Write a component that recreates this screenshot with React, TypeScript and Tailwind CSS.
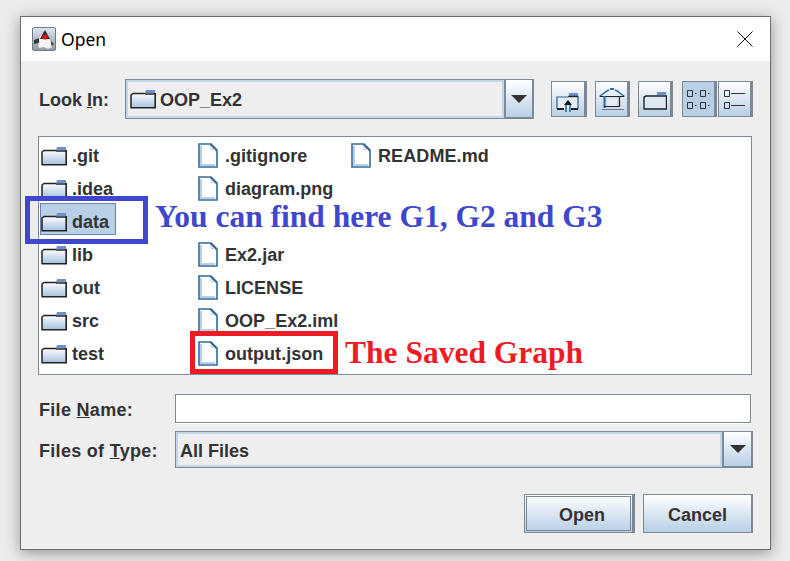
const grad = 'bg-gradient-to-b from-white to-[#b8cfe5]';

const leftCol = ['.git', '.idea', 'data', 'lib', 'out', 'src', 'test'];
const midCol = ['.gitignore', 'diagram.png', '', 'Ex2.jar', 'LICENSE', 'OOP_Ex2.iml', 'output.json'];

function FolderIcon() {
  return (
    <svg width="26" height="20" viewBox="0 0 26 20" className="shrink-0">
      <defs>
        <linearGradient id="fold" x1="0" y1="0" x2="0" y2="1">
          <stop offset="0" stopColor="#ffffff" />
          <stop offset="1" stopColor="#a9c5e2" />
        </linearGradient>
      </defs>
      <path d="M16 1H25V4H15Z" fill="#6f8fc8" />
      <path d="M1 6L3 4H25V18H1Z" fill="url(#fold)" />
      <path d="M1 18.5V6L3 4.5H15" fill="none" stroke="#222" strokeWidth="1.5" />
      <path d="M15 5H25" stroke="#222" strokeWidth="1.5" />
      <path d="M25.2 4V19M0.5 18.7H26" stroke="#222" strokeWidth="1.6" />
    </svg>
  );
}

function FileIcon() {
  return (
    <svg width="20" height="25" viewBox="0 0 20 25" className="shrink-0">
      <path d="M1 1H13L19 7V24H1Z" fill="#ffffff" stroke="#2f6b9f" strokeWidth="1.6" />
      <path d="M3 3V22H17" fill="none" stroke="#b8cfe5" strokeWidth="2" />
      <path d="M12.5 1.5L18.5 7.5" stroke="#2f5f8f" strokeWidth="1.6" />
      <path d="M13 3V6.5H17" fill="none" stroke="#b8cfe5" strokeWidth="1" />
    </svg>
  );
}

function ArrowButton({ className }: { className: string }) {
  return (
    <div className={`flex items-center justify-center border border-[#7a8a99] border-r-2 border-b-2 ${grad} ${className}`}>
      <svg width="16" height="8" viewBox="0 0 16 8">
        <path d="M0 0H16L8 8Z" fill="#333" />
      </svg>
    </div>
  );
}

function ToolButton({ pressed, className, children }: { pressed?: boolean; className: string; children: React.ReactNode }) {
  return (
    <div className={`flex h-[36px] items-center justify-center border border-[#7a8a99] border-r-[3px] ${pressed ? 'bg-[#b8cfe5]' : grad} ${className}`}>
      {children}
    </div>
  );
}

function UpIcon() {
  return (
    <svg width="24" height="20" viewBox="0 0 24 20" className="mt-[6px]">
      <path d="M13 1H22V4H13Z" fill="#6f8fc8" />
      <path d="M1 5H22V17H1Z" fill="#e3edf6" />
      <path d="M1 17V5H12M13 4.5H22V17" fill="none" stroke="#2f5f8f" strokeWidth="1.2" />
      <path d="M12 4.5H22" stroke="#222" strokeWidth="1.4" />
      <path d="M1 17H8M15 17H22" stroke="#222" strokeWidth="2" />
      <path d="M10 13V20M14 13V20" stroke="#2f6b9f" strokeWidth="1.6" />
      <path d="M12 8L8 13H16Z" fill="#111" />
    </svg>
  );
}

function HomeIcon() {
  return (
    <svg width="26" height="24" viewBox="0 0 26 24">
      <path d="M5 9H21V21H5Z" fill="#c9dbec" />
      <path d="M8 11H18V19H8Z" fill="#e4edf5" />
      <path d="M0.5 9.5L8 4L10 3" fill="none" stroke="#2f6b9f" strokeWidth="1.5" />
      <path d="M16 3L18 4L25.5 9.5" fill="none" stroke="#2f6b9f" strokeWidth="1.5" />
      <path d="M11 2H15" stroke="#2f6b9f" strokeWidth="2" />
      <path d="M1 9.5H25" stroke="#222" strokeWidth="1" />
      <path d="M5.5 9V21" stroke="#2f6b9f" strokeWidth="2" />
      <path d="M20.5 9V20M5 19.5H21" stroke="#222" strokeWidth="1.2" />
      <path d="M3 22.5H25" stroke="#778" strokeWidth="1" />
    </svg>
  );
}

function NewFolderIcon() {
  return (
    <svg width="24" height="19" viewBox="0 0 24 19" className="mt-[2px]">
      <path d="M14 1H23V4H14Z" fill="#6f8fc8" />
      <path d="M1 6H23V17H1Z" fill="#dce8f3" />
      <path d="M1 17.5V6L3 5H13" fill="none" stroke="#222" strokeWidth="1.4" />
      <path d="M13 5H23.5V18H0.5" fill="none" stroke="#222" strokeWidth="1.4" />
    </svg>
  );
}

function ListIcon() {
  const cells = [
    [0, 0],
    [13, 0],
    [0, 12],
    [13, 12],
  ];
  return (
    <svg width="24" height="20" viewBox="0 0 24 20">
      {cells.map(([x, y]) => (
        <g key={`${x}-${y}`}>
          <path d={`M${x + 0.5} ${y + 1.5}h5v6h-5z`} fill="none" stroke="#333" strokeWidth="1" />
          <path d={`M${x + 8} ${y + 4}h1.5v1h-1.5z`} fill="#333" />
        </g>
      ))}
    </svg>
  );
}

function DetailsIcon() {
  return (
    <svg width="22" height="20" viewBox="0 0 22 20">
      <path d="M0.5 1.5h5v6h-5zM0.5 13.5h5v6h-5z" fill="none" stroke="#333" strokeWidth="1" />
      <path d="M7 4.5H21M7 16.5H21" stroke="#333" strokeWidth="1" />
    </svg>
  );
}

function JavaIcon() {
  return (
    <svg width="24" height="24" viewBox="0 0 24 24" className="shrink-0">
      <defs>
        <linearGradient id="duke" x1="0" y1="0" x2="0" y2="1">
          <stop offset="0" stopColor="#dfe6ee" />
          <stop offset="1" stopColor="#8d99a6" />
        </linearGradient>
      </defs>
      <rect x="0.5" y="0.5" width="23" height="23" rx="1.5" fill="url(#duke)" stroke="#6c7a8a" />
      <path d="M13 3L18 13L20 20L16 22L12 20L7 21L6 15L8 10Z" fill="#f4f4f4" />
      <path d="M13 3L18 12H8L10.5 7Z" fill="#2b2b2b" />
      <circle cx="13" cy="10" r="2.6" fill="#e2141c" />
      <path d="M2 13L7 11V16L2 17Z M19 14L22 17L19.5 19Z" fill="#3a3a3a" />
    </svg>
  );
}

export default function App() {
  return (
    <div className="h-[561px] w-[790px] overflow-hidden bg-[#ececec] pl-5 pt-4 font-['Liberation_Sans',sans-serif] text-[18px] font-bold text-[#333333]">
      <div className="relative flex h-[534px] w-[751px] flex-col border border-[#6e6e6e] bg-[#eeeeee] shadow-[0_3px_14px_rgba(0,0,0,0.38)]">
        {/* title bar */}
        <div className="flex h-[44px] items-center bg-white pl-[11px] pr-[17px]">
          <JavaIcon />
          <span className="ml-[5px] font-['Noto_Sans',sans-serif] text-[17.5px] font-normal text-black">Open</span>
          <svg width="16" height="16" viewBox="0 0 16 16" className="ml-auto">
            <path d="M0.5 0.5L15.5 15.5M15.5 0.5L0.5 15.5" stroke="#111" strokeWidth="1" />
          </svg>
        </div>

        {/* look in row */}
        <div className="mt-[18px] flex h-[40px] items-center pl-[18px]">
          <span className="w-[86px] pt-[3px]">
            Look <span className="underline">I</span>n:
          </span>
          <div className="flex h-[40px] w-[409px]">
            <div className="flex w-[380px] items-center border border-[#7a8a99] pl-[4px] shadow-[inset_0_0_0_2px_#c5d6e8]">
              <FolderIcon />
              <span className="ml-[4px] pt-[3px]">OOP_Ex2</span>
            </div>
            <ArrowButton className="w-[29px]" />
          </div>
          <div className="ml-[17px] flex items-center">
            <ToolButton className="w-[36px]"><UpIcon /></ToolButton>
            <ToolButton className="ml-[8px] w-[35px]"><HomeIcon /></ToolButton>
            <ToolButton className="ml-[8px] w-[35px]"><NewFolderIcon /></ToolButton>
            <ToolButton pressed className="ml-[9px] w-[35px]"><ListIcon /></ToolButton>
            <ToolButton className="ml-px w-[35px]"><DetailsIcon /></ToolButton>
          </div>
        </div>

        {/* file list */}
        <div className="ml-[17px] mt-[17px] flex h-[239px] w-[714px] border border-[#7a8a99] bg-white pl-[2px] pt-[2px]">
          <div className="w-[157px]">
            {leftCol.map((name) => (
              <div key={name} className="relative flex h-[33px] items-center">
                {name === 'data' && (
                  <div className="absolute -top-[2px] left-[-1px] h-[32px] w-[76px] border border-[#6382bf] bg-[#b8cfe5]" />
                )}
                <div className="relative flex items-center">
                  <FolderIcon />
                  <span className="ml-[5px] pt-px">{name}</span>
                </div>
              </div>
            ))}
          </div>
          <div className="w-[153px]">
            {midCol.map((name, i) => (
              <div key={i} className="flex h-[33px] items-center">
                {name && <FileIcon />}
                {name && <span className="ml-[7px] pt-px tracking-[0.03px]">{name}</span>}
              </div>
            ))}
          </div>
          <div>
            <div className="flex h-[33px] items-center">
              <FileIcon />
              <span className="ml-[7px] pt-px tracking-[0.1px]">README.md</span>
            </div>
          </div>
        </div>

        {/* file name */}
        <div className="mt-[19px] flex h-[29px] items-center pl-[18px]">
          <span className="w-[136px] pt-[3px] tracking-[0.3px]">
            File <span className="underline">N</span>ame:
          </span>
          <div className="h-[29px] w-[576px] border border-[#7a8a99] bg-white shadow-[0_1px_0_#ffffff]" />
        </div>

        {/* file type */}
        <div className="mt-[8px] flex h-[37px] items-center pl-[18px]">
          <span className="w-[136px] pt-[4px] tracking-[0.3px]">
            Files of <span className="underline">T</span>ype:
          </span>
          <div className="flex h-[37px] w-[578px]">
            <div className="flex w-[548px] items-center border border-[#7a8a99] pl-[4px] pt-[4px] shadow-[inset_0_0_0_2px_#c5d6e8]">
              All Files
            </div>
            <ArrowButton className="w-[30px]" />
          </div>
        </div>

        {/* actions */}
        <div className="mt-[26px] flex justify-end gap-[8px] pr-[17px]">
          <div className={`flex h-[39px] w-[111px] items-center justify-center border border-[#7a8a99] border-r-[3px] ${grad}`}>
            <div className="flex h-[35px] w-[105px] items-center justify-center border border-[#7a8a99] pl-[7px] pt-[4px]">Open</div>
          </div>
          <div className={`flex h-[39px] w-[110px] items-center justify-center border border-[#7a8a99] border-r-2 pt-[4px] ${grad}`}>Cancel</div>
        </div>

        {/* annotations drawn over the dialog */}
        <div className="absolute left-[4px] top-[179px] h-[48px] w-[123px] border-[5px] border-[#3f48cc]" />
        <div className="absolute left-[134px] top-[180px] whitespace-nowrap font-['Liberation_Serif',serif] text-[31.5px] leading-[40px] text-[#3f48cc]">
          You can find here G1, G2 and G3
        </div>
        <div className="absolute left-[169px] top-[314px] h-[43px] w-[148px] border-[5px] border-[#ed1c24]" />
        <div className="absolute left-[324px] top-[316px] whitespace-nowrap font-['Liberation_Serif',serif] text-[31.5px] leading-[40px] text-[#ed1c24]">
          The Saved Graph
        </div>
      </div>
    </div>
  );
}
